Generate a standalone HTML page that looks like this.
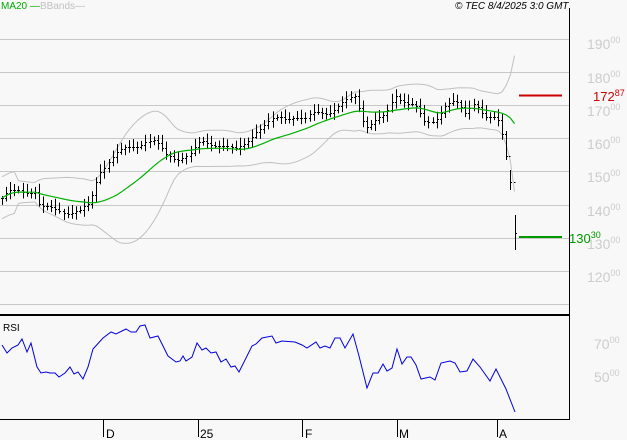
<!DOCTYPE html>
<html><head><meta charset="utf-8"><style>
body{margin:0;background:#f8f8f8;}
svg{display:block;font-family:"Liberation Sans",sans-serif;}
</style></head><body>
<svg id="s" width="627" height="440" xmlns="http://www.w3.org/2000/svg">
<rect width="627" height="440" fill="#f8f8f8"/>
<g stroke="#c8c8c8" stroke-width="1">
<line x1="0" y1="39.5" x2="569" y2="39.5"/><line x1="0" y1="72.5" x2="569" y2="72.5"/>
<line x1="0" y1="105.5" x2="569" y2="105.5"/><line x1="0" y1="138.5" x2="569" y2="138.5"/>
<line x1="0" y1="171.5" x2="569" y2="171.5"/><line x1="0" y1="205.5" x2="569" y2="205.5"/>
<line x1="0" y1="238.5" x2="569" y2="238.5"/><line x1="0" y1="271.5" x2="569" y2="271.5"/>
<line x1="0" y1="304.5" x2="569" y2="304.5"/>
</g>
<g id="bb" fill="none" stroke="#c0c0c0" stroke-width="1"></g>
<g id="bars" stroke="#000" stroke-width="1"></g>
<polyline id="ma" fill="none" stroke="#00b000" stroke-width="1.2"/>
<line x1="519" y1="95.5" x2="562" y2="95.5" stroke="#cc0000" stroke-width="2"/>
<line x1="519" y1="237" x2="562" y2="237" stroke="#009900" stroke-width="2"/>
<line x1="569.5" y1="8" x2="569.5" y2="420" stroke="#000"/>
<line x1="0" y1="315" x2="569" y2="315" stroke="#000" stroke-width="2"/>
<line x1="0" y1="419.5" x2="569" y2="419.5" stroke="#000"/>
<g stroke="#000"><line x1="103.5" y1="420" x2="103.5" y2="437"/><line x1="198.5" y1="420" x2="198.5" y2="437"/><line x1="302.5" y1="420" x2="302.5" y2="437"/><line x1="397.5" y1="420" x2="397.5" y2="437"/><line x1="497.5" y1="420" x2="497.5" y2="437"/></g>
<g font-size="12" fill="#000"><text x="106" y="438">D</text><text x="200" y="438">25</text><text x="305" y="438">F</text><text x="399" y="438">M</text><text x="499" y="438">A</text></g>
<text x="1" y="9" font-size="10" fill="#00aa00">MA20 —</text>
<text x="40" y="9" font-size="10" fill="#c0c0c0">BBands—</text>
<text x="455" y="9" font-size="10" font-style="italic" fill="#000">© TEC 8/4/2025 3:0 GMT</text>
<text x="3" y="331" font-size="10" fill="#000">RSI</text>
<g font-size="14" fill="#cccccc">
<text x="587" y="49">190<tspan font-size="9" dy="-6">00</tspan></text>
<text x="587" y="83">180<tspan font-size="9" dy="-6">00</tspan></text>
<text x="587" y="116">170<tspan font-size="9" dy="-6">00</tspan></text>
<text x="587" y="149">160<tspan font-size="9" dy="-6">00</tspan></text>
<text x="587" y="182">150<tspan font-size="9" dy="-6">00</tspan></text>
<text x="587" y="216">140<tspan font-size="9" dy="-6">00</tspan></text>
<text x="587" y="249">130<tspan font-size="9" dy="-6">00</tspan></text>
<text x="587" y="282">120<tspan font-size="9" dy="-6">00</tspan></text>
<text x="594" y="349">70<tspan font-size="9" dy="-6">00</tspan></text>
<text x="594" y="382">50<tspan font-size="9" dy="-6">00</tspan></text>
</g>
<text x="593" y="101" font-size="13" fill="#cc0000">172<tspan font-size="9" dy="-5">87</tspan></text>
<text x="569" y="243" font-size="13" fill="#009900">130<tspan font-size="9" dy="-5">30</tspan></text>
<polyline fill="none" stroke="#0000dd" stroke-width="1" points="2,345 7,353 12,348 18,345 22,339 27,352 31,343 37,367 41,373 46,372 50,373 55,373 59,377 65,373 70,367 74,374 78,372 83,379 88,367 93,349 103,338 111,332 116,334 126,329 131,332 136,332 140,326 145,325 150,338 158,336 168,356 176,362 180,361 183,356 186,361 192,357 197,343 202,350 206,348 211,353 216,352 221,362 226,359 231,367 235,366 239,372 252,346 256,344 262,338 272,336 276,343 282,341 295,342 302,345 307,348 316,342 320,348 325,346 330,348 335,338 340,338 345,348 353,334 359,356 367,388 373,373 378,373 383,364 387,371 392,368 397,349 402,364 407,357 411,357 416,365 421,379 430,377 435,380 441,363 450,361 455,363 460,372 467,371 473,359 480,367 490,381 496,369 506,389 515,412"/>
</svg>
<script>
var kp=[[0,200],[10,193],[20,190],[35,190],[40,208],[60,210],[80,212],[90,205],[95,185],[100,170],[110,158],[120,152],[130,148],[145,140],[155,142],[165,155],[175,157],[190,155],[200,143],[215,143],[225,145],[235,152],[245,143],[255,130],[265,125],[280,118],[295,115],[305,120],[315,113],[330,110],[345,103],[355,97],[365,125],[375,120],[385,118],[395,95],[405,100],[415,105],[425,125],[435,120],[445,103],[455,102],[465,115],[475,100],[485,115],[495,120],[500,125],[505,150],[510,175],[515,236]];
function f(x){for(var i=1;i<kp.length;i++){if(x<=kp[i][0]){var a=kp[i-1],b=kp[i];return a[1]+(b[1]-a[1])*(x-a[0])/(b[0]-a[0]);}}return kp[kp.length-1][1];}
var xs=[],cs=[];for(var x=2;x<=515;x+=4.1){xs.push(x);cs.push(f(x)+Math.sin(x*1.7)*3);}
var ns="http://www.w3.org/2000/svg",g=document.getElementById("bars");
function ln(p,x1,y1,x2,y2){var l=document.createElementNS(ns,"line");l.setAttribute("x1",x1);l.setAttribute("y1",y1);l.setAttribute("x2",x2);l.setAttribute("y2",y2);p.appendChild(l);}
for(var i=0;i<xs.length;i++){var c=cs[i],o=i?cs[i-1]:c,h=Math.min(c,o)-2-Math.abs(Math.sin(i*2.3))*6,l=Math.max(c,o)+2+Math.abs(Math.cos(i*1.9))*5;if(i>=xs.length-4){h=Math.min(h,c-14);}if(i==xs.length-2){h=170;l=190;}if(i==xs.length-1){h=215;l=250;}var X=Math.round(xs[i])+.5;ln(g,X,h,X,l);ln(g,X-1.5,Math.round(o)+.5,X,Math.round(o)+.5);ln(g,X,Math.round(c)+.5,X+1.5,Math.round(c)+.5);}
var ma=[],up=[],dn=[];for(var i=0;i<xs.length;i++){var s=Math.max(0,i-19),sum=0,n=0;for(var j=s;j<=i;j++){sum+=cs[j];n++;}var m=sum/n,v=0;for(var j=s;j<=i;j++)v+=(cs[j]-m)*(cs[j]-m);var sd=Math.sqrt(v/n);if(n<5)sd=8;ma.push(xs[i].toFixed(1)+","+m.toFixed(1));up.push(xs[i].toFixed(1)+","+(m-2*sd-5).toFixed(1));dn.push(xs[i].toFixed(1)+","+(m+2*sd+5).toFixed(1));}
document.getElementById("ma").setAttribute("points",ma.join(" "));
var bb=document.getElementById("bb");[up,dn].forEach(function(p){var pl=document.createElementNS(ns,"polyline");pl.setAttribute("points",p.join(" "));bb.appendChild(pl);});
</script>
</body></html>
